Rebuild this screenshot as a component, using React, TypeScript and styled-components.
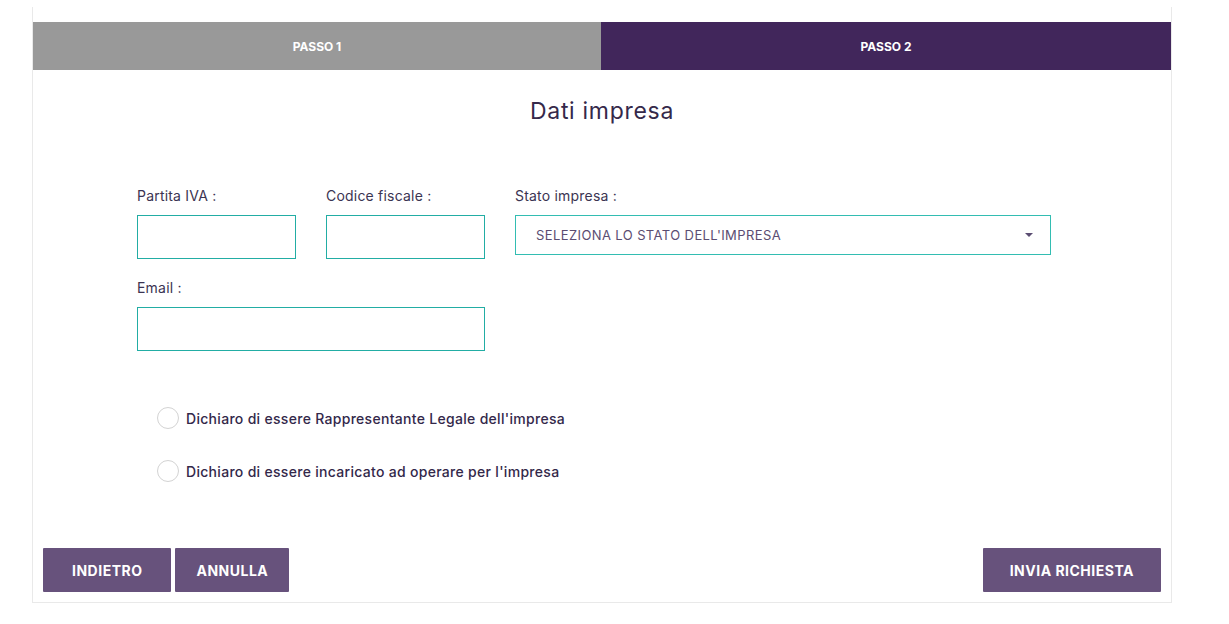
import React from "react";
import styled, { createGlobalStyle } from "styled-components";

const Global = createGlobalStyle`
  html, body { margin: 0; padding: 0; background: #ffffff; }
  body { font-family: Inter, "Noto Sans", sans-serif; color: #3a3150; }
  * { box-sizing: border-box; }
`;

const Card = styled.div`
  width: 1140px;
  margin: 7px 0 0 32px;
  border: 1px solid #e9e9e9;
  border-top: none;
  padding: 15px 0 10px;
  display: flex;
  flex-direction: column;
`;

const Steps = styled.div`
  display: grid;
  grid-template-columns: 568px 1fr;
  height: 48px;
`;

const Step = styled.div<{ $active?: boolean }>`
  display: flex;
  align-items: center;
  justify-content: center;
  background: ${(p) => (p.$active ? "#41265b" : "#999999")};
  color: #ffffff;
  font-size: 12px;
  font-weight: 700;
  letter-spacing: 0px;
`;

const Title = styled.h2`
  margin: 28px 0 0;
  text-align: center;
  font-size: 23px;
  line-height: 26px;
  font-weight: 400;
  letter-spacing: 0.7px;
  color: #35294a;
`;

const Form = styled.div`
  margin: 62px 0 0 104px;
  display: grid;
  grid-template-columns: 159px 159px 536px;
  column-gap: 30px;
  row-gap: 19px;
  align-items: start;
`;

const Field = styled.div<{ $span?: number }>`
  display: flex;
  flex-direction: column;
  grid-column: span ${(p) => p.$span ?? 1};
`;

const Label = styled.label`
  font-size: 14px;
  line-height: 20px;
  letter-spacing: 0.2px;
  color: #3b3452;
  margin-bottom: 9px;
`;

const Input = styled.input`
  height: 44px;
  width: 100%;
  border: 1px solid #22ada4;
  outline: none;
  background: #fff;
  font: inherit;
  padding: 0 12px;
`;

const Select = styled.div`
  height: 40px;
  border: 1px solid #33bdb2;
  display: flex;
  align-items: center;
  justify-content: space-between;
  padding: 0 17px 0 20px;
  font-size: 13px;
  color: #5b4d72;
  letter-spacing: 0.4px;
`;

const Caret = styled.span`
  width: 0;
  height: 0;
  border-left: 4px solid transparent;
  border-right: 4px solid transparent;
  border-top: 4px solid #5b4d72;
`;

const Radios = styled.div`
  margin: 56px 0 0 124px;
  display: flex;
  flex-direction: column;
  gap: 31px;
`;

const RadioRow = styled.label`
  display: flex;
  align-items: center;
  gap: 7px;
  font-size: 14px;
  font-weight: 500;
  letter-spacing: 0.3px;
  color: #33284a;
  height: 22px;
`;

const Circle = styled.span`
  width: 22px;
  height: 22px;
  border-radius: 50%;
  border: 1px solid #d3d3d3;
  background: #fff;
`;

const Actions = styled.div`
  margin-top: 66px;
  padding: 0 10px;
  display: flex;
  align-items: center;
  gap: 4px;
`;

const Button = styled.button<{ $push?: boolean; $pad: number }>`
  height: 44px;
  padding: 0 ${(p) => p.$pad}px;
  margin-left: ${(p) => (p.$push ? "auto" : "0")};
  border: none;
  border-radius: 1px;
  background: #67527c;
  color: #ffffff;
  font-family: Inter, "Noto Sans", sans-serif;
  font-size: 14px;
  font-weight: 700;
  letter-spacing: 0.5px;
  text-transform: uppercase;
  cursor: pointer;
`;

export default function App() {
  return (
    <>
      <Global />
      <Card>
        <Steps>
          <Step>PASSO 1</Step>
          <Step $active>PASSO 2</Step>
        </Steps>
        <Title>Dati impresa</Title>
        <Form>
          <Field>
            <Label>Partita IVA :</Label>
            <Input />
          </Field>
          <Field>
            <Label>Codice fiscale :</Label>
            <Input />
          </Field>
          <Field>
            <Label>Stato impresa :</Label>
            <Select>
              <span>SELEZIONA LO STATO DELL'IMPRESA</span>
              <Caret />
            </Select>
          </Field>
          <Field $span={2}>
            <Label>Email :</Label>
            <Input />
          </Field>
        </Form>
        <Radios>
          <RadioRow>
            <Circle />
            Dichiaro di essere Rappresentante Legale dell'impresa
          </RadioRow>
          <RadioRow>
            <Circle />
            Dichiaro di essere incaricato ad operare per l'impresa
          </RadioRow>
        </Radios>
        <Actions>
          <Button $pad={29}>Indietro</Button>
          <Button $pad={21}>Annulla</Button>
          <Button $pad={27} $push>Invia richiesta</Button>
        </Actions>
      </Card>
    </>
  );
}
